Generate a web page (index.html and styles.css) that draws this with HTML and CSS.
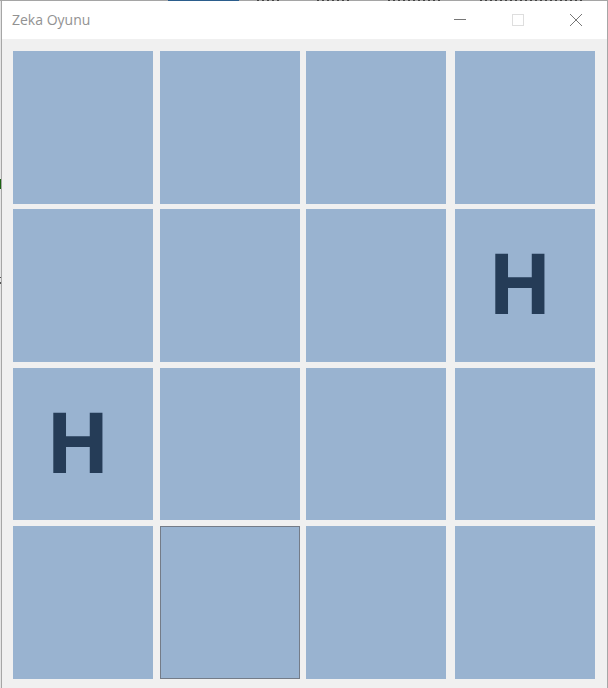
FILE: index.html
```html
<!DOCTYPE html>
<html lang="tr">
<head>
<meta charset="utf-8">
<meta name="viewport" content="width=device-width, initial-scale=1">
<title>Zeka Oyunu</title>
<link rel="stylesheet" href="styles.css">
</head>
<body>
<main class="window">
  <header class="titlebar">
    <h1 class="title">Zeka Oyunu</h1>
    <div class="controls">
      <button class="control" type="button" aria-label="Simge durumuna küçült">
        <svg width="12" height="12" viewBox="0 0 12 12"><path d="M0 5.5H12" stroke="#777"/></svg>
      </button>
      <button class="control" type="button" aria-label="Ekranı kapla" disabled>
        <svg width="12" height="12" viewBox="0 0 12 12"><rect x=".5" y=".5" width="11" height="11" fill="none" stroke="#dedede"/></svg>
      </button>
      <button class="control" type="button" aria-label="Kapat">
        <svg width="12" height="12" viewBox="0 0 12 12"><path d="M0 0L12 12M12 0L0 12" stroke="#777"/></svg>
      </button>
    </div>
  </header>
  <section class="board" aria-label="Oyun alanı">
    <button class="card" type="button" aria-label="Kart 1"></button>
    <button class="card" type="button" aria-label="Kart 2"></button>
    <button class="card" type="button" aria-label="Kart 3"></button>
    <button class="card" type="button" aria-label="Kart 4"></button>
    <button class="card" type="button" aria-label="Kart 5"></button>
    <button class="card" type="button" aria-label="Kart 6"></button>
    <button class="card" type="button" aria-label="Kart 7"></button>
    <button class="card" type="button">H</button>
    <button class="card" type="button">H</button>
    <button class="card" type="button" aria-label="Kart 10"></button>
    <button class="card" type="button" aria-label="Kart 11"></button>
    <button class="card" type="button" aria-label="Kart 12"></button>
    <button class="card" type="button" aria-label="Kart 13"></button>
    <button class="card card-selected" type="button" aria-label="Kart 14"></button>
    <button class="card" type="button" aria-label="Kart 15"></button>
    <button class="card" type="button" aria-label="Kart 16"></button>
  </section>
</main>
</body>
</html>
```
FILE: styles.css
```css
* {
  box-sizing: border-box;
}

/* The strips outside the window show the application behind it. */
body {
  margin: 0;
  padding: 1px 0 0 1px;
  min-height: 100vh;
  display: flex;
  font-family: "Open Sans", "Noto Sans", sans-serif;
  background:
    linear-gradient(#2b5d8c, #2b5d8c) 168px 0 / 71px 1px no-repeat,
    repeating-linear-gradient(90deg, #444 0 2px, #a5a5a5 2px 5px) 257px 0 / 22px 1px no-repeat,
    repeating-linear-gradient(90deg, #444 0 2px, #a5a5a5 2px 5px) 317px 0 / 34px 1px no-repeat,
    repeating-linear-gradient(90deg, #444 0 2px, #a5a5a5 2px 5px) 388px 0 / 54px 1px no-repeat,
    repeating-linear-gradient(90deg, #444 0 2px, #a5a5a5 2px 5px) 480px 0 / 105px 1px no-repeat,
    linear-gradient(#a5a5a5, #a5a5a5) 0 0 / 100% 1px no-repeat,
    linear-gradient(#1c6312, #1c6312) 0 179px / 2px 10px no-repeat,
    linear-gradient(#555, #555) 0 277px / 2px 1px no-repeat,
    linear-gradient(#555, #555) 0 282px / 2px 2px no-repeat,
    #e4e4e4;
}

.window {
  flex: 1;
  display: flex;
  flex-direction: column;
  border-left: 1px solid #a6a6a6;
  border-right: 1px solid #a6a6a6;
  background: #f0f0f0;
}

.titlebar {
  display: flex;
  align-items: center;
  justify-content: space-between;
  height: 38px;
  padding: 0 2px 0 10px;
  background: #fff;
}

.title {
  margin: 0;
  font-size: 14px;
  line-height: 20px;
  font-weight: 400;
  color: #929292;
}

.controls {
  display: flex;
  align-self: stretch;
}

.control {
  display: flex;
  align-items: center;
  justify-content: center;
  width: 58px;
  padding: 0;
  border: 0;
  background: none;
}

.board {
  flex: 1;
  display: grid;
  grid-template-columns: 1fr 7px 1fr 6px 1fr 9px 1fr;
  grid-template-rows: 1fr 5px 1fr 6px 1fr 6px 1fr;
  padding: 12px 12px 9px 11px;
}

.card {
  min-width: 0;
  min-height: 0;
  padding: 0 10px 6px 0;
  border: 0;
  border-radius: 0;
  background: #99b3d0;
  color: #253c57;
  font-family: inherit;
  font-size: 84px;
  line-height: 114px;
  font-weight: 700;
}

.card:nth-child(4n + 1) { grid-column: 1; }
.card:nth-child(4n + 2) { grid-column: 3; }
.card:nth-child(4n + 3) { grid-column: 5; }
.card:nth-child(4n + 4) { grid-column: 7; }

.card:nth-child(-n + 4) { grid-row: 1; }
.card:nth-child(n + 5):nth-child(-n + 8) { grid-row: 3; }
.card:nth-child(n + 9):nth-child(-n + 12) { grid-row: 5; }
.card:nth-child(n + 13) { grid-row: 7; }

.card-selected {
  border: 1px solid #747c88;
}
```
